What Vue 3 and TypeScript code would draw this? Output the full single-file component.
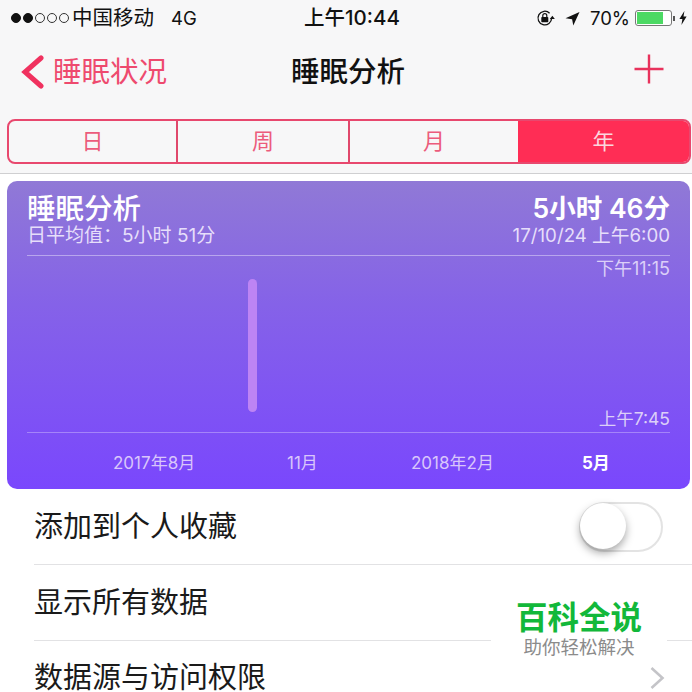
<script setup lang="ts">
const segments = ['日', '周', '月', '年']
const activeSegment = '年'

interface IAxisLabel {
  text: string
  current?: boolean
}
const axisLabels: IAxisLabel[] = [
  { text: '2017年8月' },
  { text: '11月' },
  { text: '2018年2月' },
  { text: '5月', current: true },
]
</script>

<template>
  <div class="page">
    <header class="top">
      <div class="status">
        <div class="status-left">
          <span class="signal">
            <i class="dot on"></i><i class="dot on"></i><i class="dot"></i><i class="dot"></i><i class="dot"></i>
          </span>
          <span class="carrier">中国移动</span>
          <span class="net">4G</span>
        </div>
        <div class="clock">上午10:44</div>
        <div class="status-right">
          <svg class="lock" width="20" height="18" viewBox="0 0 20 18">
            <path d="M16.600 9a6.800 6.800 0 1 1-2-4.800" fill="none" stroke="#111" stroke-width="1.300" />
            <path d="M17.400 6.800l-2.600 3.100h5z" fill="#111" />
            <rect x="6.300" y="8" width="7" height="5.200" rx="0.800" fill="#111" />
            <path d="M7.800 8V6.600a2 2 0 0 1 4 0V8" fill="none" stroke="#111" stroke-width="1.200" />
          </svg>
          <svg class="arrow" width="15" height="15" viewBox="0 0 15 15">
            <path d="M14.500 1L0.500 7.300l6.600 0.900 1.200 6.300z" fill="#111" />
          </svg>
          <span class="percent">70%</span>
          <span class="battery"><span class="battery-fill"></span></span>
          <span class="battery-tip"></span>
          <svg class="bolt" width="8" height="14" viewBox="0 0 8 14">
            <path d="M5.400 0L0.400 8h3l-1 6 5.200-8.400H4.500z" fill="#111" />
          </svg>
        </div>
      </div>

      <nav class="nav">
        <div class="back">
          <svg width="24" height="34" viewBox="0 0 24 34">
            <path d="M21 3L5 17 21 31" fill="none" stroke="#f0315f" stroke-width="5" stroke-linecap="round" />
          </svg>
          <span>睡眠状况</span>
        </div>
        <div class="title">睡眠分析</div>
        <svg class="plus" width="30" height="30" viewBox="0 0 30 30">
          <path d="M15 0.500V29.500M0.500 15H29.500" stroke="#e8325c" stroke-width="2.400" />
        </svg>
      </nav>

      <div class="segments">
        <div
          v-for="seg in segments"
          :key="seg"
          class="segment"
          :class="{ active: seg === activeSegment }"
        >
          {{ seg }}
        </div>
      </div>
    </header>

    <section class="card">
      <div class="card-head">
        <div>
          <div class="card-title">睡眠分析</div>
          <div class="card-sub">日平均值：5小时 51分</div>
        </div>
        <div class="head-right">
          <div class="card-value">5小时 46分</div>
          <div class="card-sub">17/10/24 上午6:00</div>
        </div>
      </div>
      <div class="chart">
        <span class="chart-max">下午11:15</span>
        <span class="bar"></span>
        <span class="chart-min">上午7:45</span>
      </div>
      <div class="axis">
        <span
          v-for="label in axisLabels"
          :key="label.text"
          class="axis-label"
          :class="{ current: label.current }"
        >
          {{ label.text }}
        </span>
      </div>
    </section>

    <ul class="list">
      <li class="row row-toggle">
        <span class="row-text">添加到个人收藏</span>
        <span class="toggle"><span class="knob"></span></span>
      </li>
      <li class="row">
        <span class="row-text">显示所有数据</span>
      </li>
      <li class="row last">
        <span class="row-text">数据源与访问权限</span>
        <svg class="chevron" width="16" height="24" viewBox="0 0 16 24">
          <path d="M2.500 2L13.500 12 2.500 22" fill="none" stroke="#c4c4c8" stroke-width="2.600" />
        </svg>
      </li>
    </ul>

    <div class="mark">
      <div class="mark-title">百科全说</div>
      <div class="mark-sub">助你轻松解决</div>
    </div>
  </div>
</template>

<style scoped>
.page {
  position: relative;
  width: 692px;
  height: 692px;
  overflow: hidden;
  background: #fff;
  color: #111;
  font-family: Inter, 'Noto Sans CJK SC', sans-serif;
}

.top {
  height: 174px;
  box-sizing: border-box;
  background: #f7f7f8;
  border-bottom: 1px solid #cfcfd1;
}

.status {
  display: flex;
  justify-content: space-between;
  align-items: center;
  position: relative;
  box-sizing: border-box;
  height: 32px;
  padding: 4px 5px 0 11px;
  font-size: 18.500px;
  line-height: 24px;
}

.status-left,
.status-right {
  display: flex;
  align-items: center;
}

.signal {
  display: flex;
  gap: 2px;
  margin-right: 3px;
}

.dot {
  width: 10px;
  height: 10px;
  box-sizing: border-box;
  border: 1px solid #333;
  border-radius: 50%;
}

.dot.on {
  background: #111;
  border-color: #111;
}

.carrier {
  font-size: 20.500px;
}

.net {
  margin-left: 17px;
}

.clock {
  position: absolute;
  left: 304px;
  font-size: 20.500px;
  font-weight: 500;
}

.lock {
  margin-right: 10px;
}

.arrow {
  margin-right: 10px;
}

.percent {
  margin-right: 5px;
}

.battery {
  display: block;
  width: 37px;
  height: 16px;
  box-sizing: border-box;
  padding: 1px;
  background: #fff;
  border: 1px solid #777;
  border-radius: 3px;
}

.battery-fill {
  display: block;
  width: 26px;
  height: 100%;
  background: #4cd964;
}

.battery-tip {
  width: 2px;
  height: 5px;
  margin: 0 4px 0 1px;
  background: #555;
}

.nav {
  display: flex;
  align-items: center;
  position: relative;
  height: 73px;
  padding: 0 28px 0 20px;
  justify-content: space-between;
}

.back {
  display: flex;
  align-items: center;
  gap: 9px;
  padding-top: 6px;
  color: #ee4a6e;
  font-size: 28.500px;
  line-height: 36px;
}

.title {
  position: absolute;
  left: 291px;
  padding-top: 6px;
  font-size: 28.500px;
  font-weight: 500;
  line-height: 36px;
}

.segments {
  display: grid;
  grid-template-columns: 167px 172px 170px 1fr;
  height: 45px;
  margin: 14px 1px 0 7px;
  box-sizing: border-box;
  overflow: hidden;
  border: 2px solid #e8486e;
  border-radius: 8px;
}

.segment {
  display: flex;
  align-items: center;
  justify-content: center;
  padding-bottom: 6px;
  color: #ec5c7c;
  font-size: 22px;
  border-left: 2px solid #e0486c;
}

.segment:first-child {
  border-left: none;
}

.segment.active {
  background: #ff2d55;
  color: #fbd6de;
  border-left: none;
}

.card {
  box-sizing: border-box;
  height: 308px;
  margin: 7px 2px 0 7px;
  padding: 0 20px;
  color: #fff;
  background: linear-gradient(#9079d6, #8562e8 40%, #7a47fd);
  border-radius: 10px;
}

.card-head {
  display: flex;
  justify-content: space-between;
  box-sizing: border-box;
  height: 75px;
  padding-top: 11px;
  border-bottom: 1px solid rgba(255, 255, 255, 0.4);
}

.head-right {
  text-align: right;
}

.card-title {
  font-size: 28.500px;
  font-weight: 500;
  line-height: 33px;
}

.card-value {
  font-size: 26.500px;
  font-weight: 600;
  line-height: 33px;
}

.card-sub {
  color: #e6defa;
  font-size: 19px;
  line-height: 22px;
}

.head-right .card-sub {
  font-size: 18.700px;
}

.chart {
  position: relative;
  height: 177px;
  box-sizing: border-box;
  border-bottom: 1px solid rgba(255, 255, 255, 0.3);
}

.chart-max,
.chart-min {
  position: absolute;
  right: 0;
  color: #dccff8;
  line-height: 24px;
}

.chart-max {
  top: 1px;
  font-size: 18px;
}

.chart-min {
  bottom: 1px;
  font-size: 17.500px;
}

.bar {
  position: absolute;
  left: 221px;
  top: 23px;
  width: 9px;
  height: 133px;
  background: #bd84f4;
  border-radius: 5px;
}

.axis {
  position: relative;
  height: 56px;
}

.axis-label {
  position: absolute;
  top: 18px;
  color: #d9c6fb;
  font-size: 17px;
  line-height: 24px;
}

.axis-label:nth-child(1) {
  left: 86px;
}

.axis-label:nth-child(2) {
  left: 260px;
}

.axis-label:nth-child(3) {
  left: 384px;
}

.axis-label:nth-child(4) {
  left: 555px;
}

.axis-label.current {
  color: #fff;
  font-weight: 700;
}

.list {
  margin: 0;
  padding: 0 0 0 34px;
  list-style: none;
}

.row {
  display: flex;
  justify-content: space-between;
  align-items: center;
  box-sizing: border-box;
  height: 76px;
  padding: 0 34px 0 0;
  font-size: 29px;
  color: #1a1a1a;
  border-bottom: 1px solid #e2e2e4;
}

.row-text {
  line-height: 29px;
}

.row-toggle {
  padding-right: 29px;
}

.last {
  height: 51px;
  align-items: flex-end;
  padding-right: 27px;
  border-bottom: none;
}

.toggle {
  display: block;
  position: relative;
  width: 84px;
  height: 50px;
  box-sizing: border-box;
  background: #fff;
  border: 2px solid #e3e3e3;
  border-radius: 25px;
}

.knob {
  position: absolute;
  left: -1px;
  top: -1px;
  width: 46px;
  height: 46px;
  background: #fff;
  border-radius: 50%;
  box-shadow: 0 4px 8px rgba(0, 0, 0, 0.35);
}

.chevron {
  margin-bottom: 2px;
}

.mark {
  position: absolute;
  left: 491px;
  top: 596px;
  width: 176px;
  height: 70px;
  text-align: center;
  background: #fff;
}

.mark-title {
  color: #12b83a;
  font-size: 31.500px;
  font-weight: 700;
  line-height: 44px;
}

.mark-sub {
  margin-top: -3px;
  color: #8b8b8b;
  font-size: 18.500px;
  line-height: 20px;
}
</style>

<style>
html,
body {
  margin: 0;
  background: #fff;
}
</style>
